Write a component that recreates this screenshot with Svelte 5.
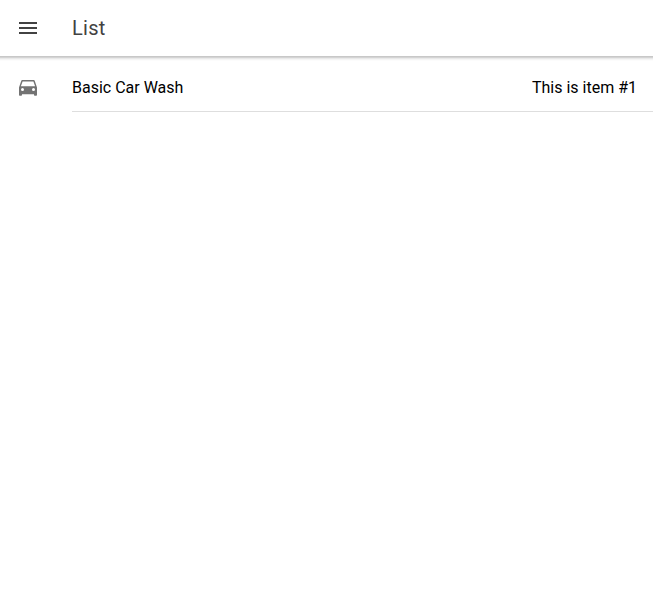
<script>
  const items = [{ title: 'Basic Car Wash', note: 'This is item #1' }];
</script>

<div class="page">
  <header>
    <button aria-label="Menu">
      <svg viewBox="0 0 512 512" width="24" height="24"><path d="M64 384h384v-42.666H64V384zm0-106.666h384v-42.667H64v42.667zM64 128v42.665h384V128H64z" /></svg>
    </button>
    <h1>List</h1>
  </header>
  <main>
    {#each items as item}
      <div class="item">
        <svg class="car" viewBox="0 0 24 24" width="24" height="24"><path fill-rule="evenodd" d="M18.900 5.300C18.700 4.500 18.200 4 17.300 4H6.700c-.9 0-1.400.5-1.600 1.300L3 11.500V18.800c0 .6.400 1 1 1h1c.6 0 1-.4 1-1v-.6h12v.6c0 .6.400 1 1 1h1c.6 0 1-.4 1-1v-7.300L18.900 5.300zM6.500 15a1.500 1.500 0 1 1 0-3 1.500 1.500 0 0 1 0 3zm11 0a1.500 1.500 0 1 1 0-3 1.500 1.500 0 0 1 0 3zM4.900 10.200l1.700-4.800h10.800l1.700 4.800H4.900z" /></svg>
        <div class="inner">
          <span>{item.title}</span>
          <span>{item.note}</span>
        </div>
      </div>
    {/each}
  </main>
</div>

<style>
  :global(body) {
    margin: 0;
    background: #fff;
  }
  .page {
    height: 607px;
    font-family: Roboto, sans-serif;
    overflow: hidden;
  }
  header {
    height: 56px;
    display: flex;
    align-items: center;
    background: #fff;
  }
  button {
    width: 56px;
    height: 56px;
    padding: 0;
    border: 0;
    background: none;
    display: flex;
    align-items: center;
    justify-content: center;
    fill: #424242;
  }
  h1 {
    margin: 0 0 0 16px;
    font-size: 20px;
    font-weight: 400;
    letter-spacing: 0.3px;
    color: #424242;
  }
  main {
    padding-top: 8px;
    background: linear-gradient(#c8c8c8 0 1px, #d4d4d4 1px 2px, #e9e9e9 2px 3px, #f5f5f5 3px 4px, #fcfcfc 4px 5px, #fff 5px);
  }
  .item {
    display: flex;
    padding-left: 16px;
  }
  .car {
    margin: 12px 32px 0 0;
    fill: #737373;
    flex: none;
  }
  .inner {
    flex: 1;
    height: 47px;
    border-bottom: 1px solid #dedede;
    display: flex;
    align-items: center;
    justify-content: space-between;
    padding-right: 16px;
    font-size: 16px;
    color: #000;
  }
</style>
